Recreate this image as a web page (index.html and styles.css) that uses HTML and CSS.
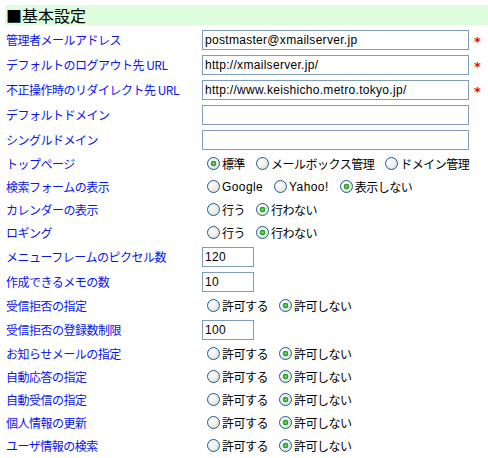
FILE: index.html
```html
<!DOCTYPE html>
<html lang="ja">
<head>
<meta charset="utf-8">
<title>基本設定</title>
<link rel="stylesheet" href="styles.css">
</head>
<body>
<div class="page">
  <h1 class="band">■基本設定</h1>
  <div class="form">
    <div class="row tall"><div class="label">管理者メールアドレス</div><div class="val"><input class="text wide" type="text" value="postmaster@xmailserver.jp"><span class="req">*</span></div></div>
    <div class="row tall"><div class="label">デフォルトのログアウト先 URL</div><div class="val"><input class="text wide" type="text" value="http://xmailserver.jp/"><span class="req">*</span></div></div>
    <div class="row tall"><div class="label">不正操作時のリダイレクト先 URL</div><div class="val"><input class="text wide" type="text" value="http://www.keishicho.metro.tokyo.jp/"><span class="req">*</span></div></div>
    <div class="row tall"><div class="label">デフォルトドメイン</div><div class="val"><input class="text wide" type="text" value=""></div></div>
    <div class="row tall"><div class="label">シングルドメイン</div><div class="val"><input class="text wide" type="text" value=""></div></div>
    <div class="row"><div class="label">トップページ</div><div class="val">
      <label class="opt"><input class="radio" type="radio" name="top" checked>標準</label>
      <label class="opt"><input class="radio" type="radio" name="top">メールボックス管理</label>
      <label class="opt"><input class="radio" type="radio" name="top">ドメイン管理</label>
    </div></div>
    <div class="row"><div class="label">検索フォームの表示</div><div class="val">
      <label class="opt"><input class="radio" type="radio" name="search"><span class="lat">Google</span></label>
      <label class="opt"><input class="radio" type="radio" name="search"><span class="lat">Yahoo!</span></label>
      <label class="opt"><input class="radio" type="radio" name="search" checked>表示しない</label>
    </div></div>
    <div class="row"><div class="label">カレンダーの表示</div><div class="val">
      <label class="opt"><input class="radio" type="radio" name="cal">行う</label>
      <label class="opt"><input class="radio" type="radio" name="cal" checked>行わない</label>
    </div></div>
    <div class="row"><div class="label">ロギング</div><div class="val">
      <label class="opt"><input class="radio" type="radio" name="log">行う</label>
      <label class="opt"><input class="radio" type="radio" name="log" checked>行わない</label>
    </div></div>
    <div class="row tall"><div class="label">メニューフレームのピクセル数</div><div class="val"><input class="text small" type="text" value="120"></div></div>
    <div class="row tall"><div class="label">作成できるメモの数</div><div class="val"><input class="text small" type="text" value="10"></div></div>
    <div class="row"><div class="label">受信拒否の指定</div><div class="val">
      <label class="opt"><input class="radio" type="radio" name="deny">許可する</label>
      <label class="opt"><input class="radio" type="radio" name="deny" checked>許可しない</label>
    </div></div>
    <div class="row tall"><div class="label">受信拒否の登録数制限</div><div class="val"><input class="text small" type="text" value="100"></div></div>
    <div class="row"><div class="label">お知らせメールの指定</div><div class="val">
      <label class="opt"><input class="radio" type="radio" name="notice">許可する</label>
      <label class="opt"><input class="radio" type="radio" name="notice" checked>許可しない</label>
    </div></div>
    <div class="row"><div class="label">自動応答の指定</div><div class="val">
      <label class="opt"><input class="radio" type="radio" name="reply">許可する</label>
      <label class="opt"><input class="radio" type="radio" name="reply" checked>許可しない</label>
    </div></div>
    <div class="row"><div class="label">自動受信の指定</div><div class="val">
      <label class="opt"><input class="radio" type="radio" name="recv">許可する</label>
      <label class="opt"><input class="radio" type="radio" name="recv" checked>許可しない</label>
    </div></div>
    <div class="row"><div class="label">個人情報の更新</div><div class="val">
      <label class="opt"><input class="radio" type="radio" name="upd">許可する</label>
      <label class="opt"><input class="radio" type="radio" name="upd" checked>許可しない</label>
    </div></div>
    <div class="row"><div class="label">ユーザ情報の検索</div><div class="val">
      <label class="opt"><input class="radio" type="radio" name="find">許可する</label>
      <label class="opt"><input class="radio" type="radio" name="find" checked>許可しない</label>
    </div></div>
  </div>
</div>
</body>
</html>
```
FILE: styles.css
```css
html, body {
  margin: 0;
  padding: 0;
  background: #ffffff;
}
body {
  font-family: "Noto Sans CJK JP", "Liberation Sans", sans-serif;
  font-size: 12px;
  color: #000000;
  letter-spacing: -0.5px;
}
.page {
  padding: 5px 0 0 5px;
}
.band {
  margin: 0;
  height: 20px;
  line-height: 20px;
  background: #ddfddd;
  font-size: 16px;
  font-weight: normal;
  padding-left: 1px;
  letter-spacing: 0;
  color: #000000;
}
.form {
  margin-top: 2px;
  display: flex;
  flex-direction: column;
}
.row {
  display: flex;
  align-items: center;
  height: 23px;
}
.row.tall {
  height: 25px;
}
.label {
  width: 196px;
  padding-left: 1px;
  color: #0a14f0;
  line-height: 1;
  white-space: nowrap;
}
.val {
  display: flex;
  align-items: center;
  line-height: 1;
  white-space: nowrap;
}
.text {
  box-sizing: border-box;
  height: 20px;
  margin: 0;
  border: 1px solid #7f9db9;
  padding: 0 2px;
  font-family: "Liberation Sans", sans-serif;
  font-size: 12px;
  letter-spacing: 0.3px;
  color: #000000;
  background: #ffffff;
  outline: none;
}
.text.wide {
  width: 267px;
}
.text.small {
  width: 52px;
}
.req {
  margin-left: 5px;
  color: #ff0000;
  font-family: "DejaVu Sans", sans-serif;
  font-weight: bold;
  font-size: 13px;
  letter-spacing: 0;
  line-height: 1;
  position: relative;
  top: 2px;
}
.opt {
  display: inline-flex;
  align-items: center;
  margin-right: 6px;
}
.lat {
  font-family: "Liberation Sans", sans-serif;
  letter-spacing: 0.4px;
}
.radio {
  appearance: none;
  -webkit-appearance: none;
  box-sizing: border-box;
  width: 13px;
  height: 13px;
  margin: 0 2px 0 5px;
  border: 1px solid #1f5a8c;
  border-radius: 50%;
  background: radial-gradient(circle at 35% 35%, #ffffff 0, #f2f2ef 40%, #d4d4cc 100%);
}
.radio:checked {
  background:
    radial-gradient(circle at 50% 50%, #8ee88e 0, #2fb42f 1.6px, #1e961e 2.6px, rgba(0,0,0,0) 3.1px),
    radial-gradient(circle at 35% 35%, #ffffff 0, #f2f2ef 40%, #d4d4cc 100%);
}
```
